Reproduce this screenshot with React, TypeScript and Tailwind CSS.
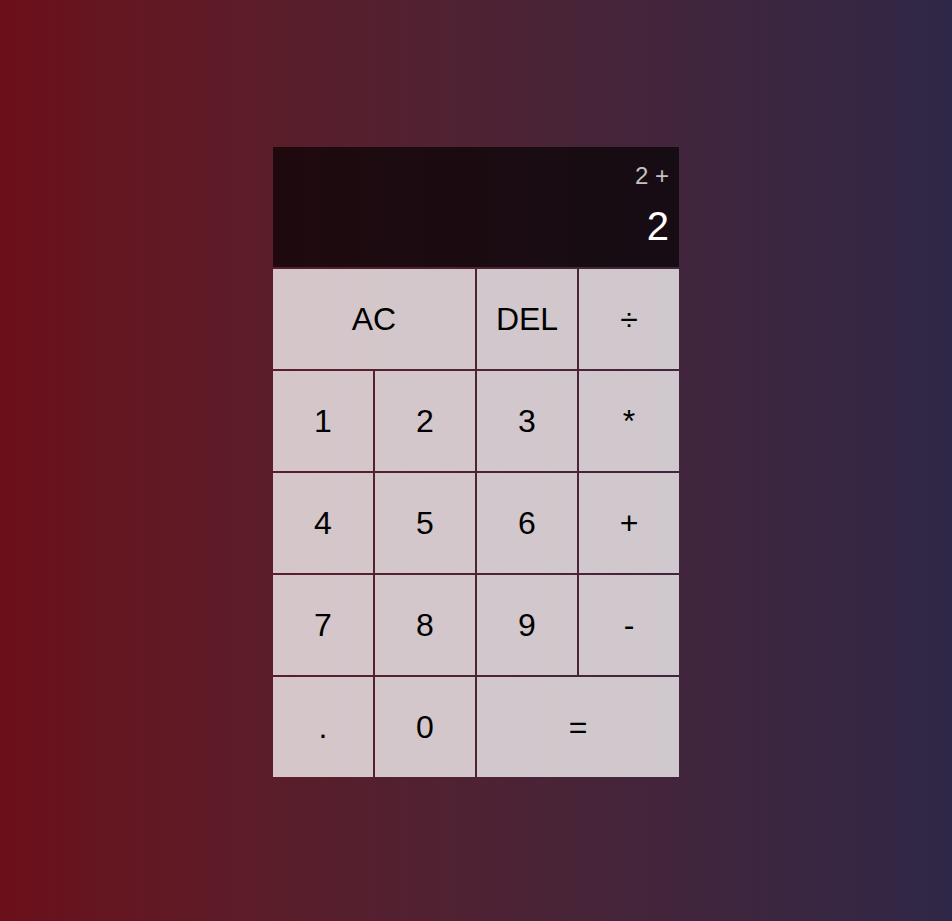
import React from "react";

const Key = ({ label, wide = false }: { label: string; wide?: boolean }) => (
  <button
    className={
      wide
        ? "col-span-2 cursor-pointer bg-white/75 text-[2rem] text-black outline-none"
        : "cursor-pointer bg-white/75 text-[2rem] text-black outline-none"
    }
  >
    {label}
  </button>
);

const App = () => {
  return (
    <div className="min-h-screen w-full flex items-center justify-center bg-gradient-to-r from-[#6b0f1a] to-[#2f2747] font-['Liberation_Sans',Arial,sans-serif]">
      <div className="mt-[2px] grid grid-cols-[repeat(4,100px)] grid-rows-[120px_repeat(5,100px)] gap-[2px]">
        {/* Display */}
        <div className="col-span-4 bg-black/[0.66] flex flex-col items-end justify-around p-[10px] break-all">
          <div className="text-white/75 text-[1.5rem]">2 +</div>
          <div className="text-white text-[2.5rem]">2</div>
        </div>

        <Key label="AC" wide />
        <Key label="DEL" />
        <Key label="÷" />
        <Key label="1" />
        <Key label="2" />
        <Key label="3" />
        <Key label="*" />
        <Key label="4" />
        <Key label="5" />
        <Key label="6" />
        <Key label="+" />
        <Key label="7" />
        <Key label="8" />
        <Key label="9" />
        <Key label="-" />
        <Key label="." />
        <Key label="0" />
        <Key label="=" wide />
      </div>
    </div>
  );
};

export default App;
